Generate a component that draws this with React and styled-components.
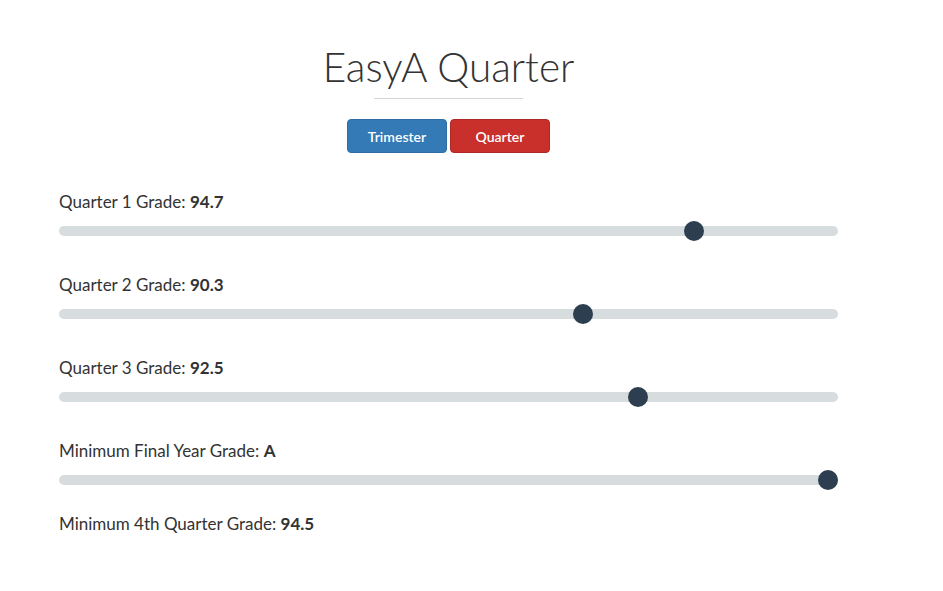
import React from "react";
import styled, { createGlobalStyle } from "styled-components";

const GlobalStyle = createGlobalStyle`
body {
  margin: 0;
  background: #fff;
  font-family: Lato, "Helvetica Neue", Arial, sans-serif;
  color: #333;
}
`;

const Page = styled.div`
width: 779px;
padding: 40px 0 0 59px;
`;

const Header = styled.div`
display: flex;
flex-direction: column;
align-items: center;
`;

const Title = styled.h1`
margin: 0;
font-size: 40.5px;
font-weight: 300;
line-height: 54px;
color: #333;
`;

const Rule = styled.hr`
width: 149px;
margin: 4px 0 20px;
border: 0;
border-top: 1px solid #d5d5d5;
`;

const Buttons = styled.div`
display: flex;
gap: 3px;
`;

const Button = styled.button`
width: 100px;
height: 34px;
border-radius: 4px;
border: 1px solid ${(p) => (p.red ? "#ac2925" : "#2e6da4")};
background: ${(p) => (p.red ? "#c9302c" : "#337ab7")};
color: #fff;
font-family: Lato, sans-serif;
font-size: 14px;
font-weight: 600;
padding: 0;
`;

const Sliders = styled.div`
margin-top: 39px;
`;

const Row = styled.div`
height: ${(p) => (p.last ? 73 : 83)}px;
`;

const Label = styled.div`
font-size: 17px;
line-height: 20px;
color: #333;
b {
  font-weight: 700;
}
`;

const Range = styled.input`
display: block;
-webkit-appearance: none;
appearance: none;
width: 779px;
height: 10px;
margin: 14px 0 0;
border-radius: 5px;
background: #d7dcdf;
outline: none;
&::-webkit-slider-thumb {
  -webkit-appearance: none;
  appearance: none;
  width: 20px;
  height: 20px;
  border-radius: 50%;
  background: #2c3e50;
  border: 0;
}
`;

const sliders = [
  { label: "Quarter 1 Grade", value: 94.7, min: 70, max: 100 },
  { label: "Quarter 2 Grade", value: 90.3, min: 70, max: 100 },
  { label: "Quarter 3 Grade", value: 92.5, min: 70, max: 100 },
  { label: "Minimum Final Year Grade", text: "A", value: 4, min: 0, max: 4 },
];

export default function App() {
  return (
    <Page>
      <GlobalStyle />
      <Header>
        <Title>EasyA Quarter</Title>
        <Rule />
        <Buttons>
          <Button>Trimester</Button>
          <Button red>Quarter</Button>
        </Buttons>
      </Header>
      <Sliders>
        {sliders.map((s, i) => (
          <Row key={s.label} last={i === sliders.length - 1}>
            <Label>
              {s.label}: <b>{s.text || s.value}</b>
            </Label>
            <Range
              type="range"
              min={s.min}
              max={s.max}
              step="0.1"
              defaultValue={s.value}
            />
          </Row>
        ))}
        <Label>
          Minimum 4th Quarter Grade: <b>94.5</b>
        </Label>
      </Sliders>
    </Page>
  );
}
